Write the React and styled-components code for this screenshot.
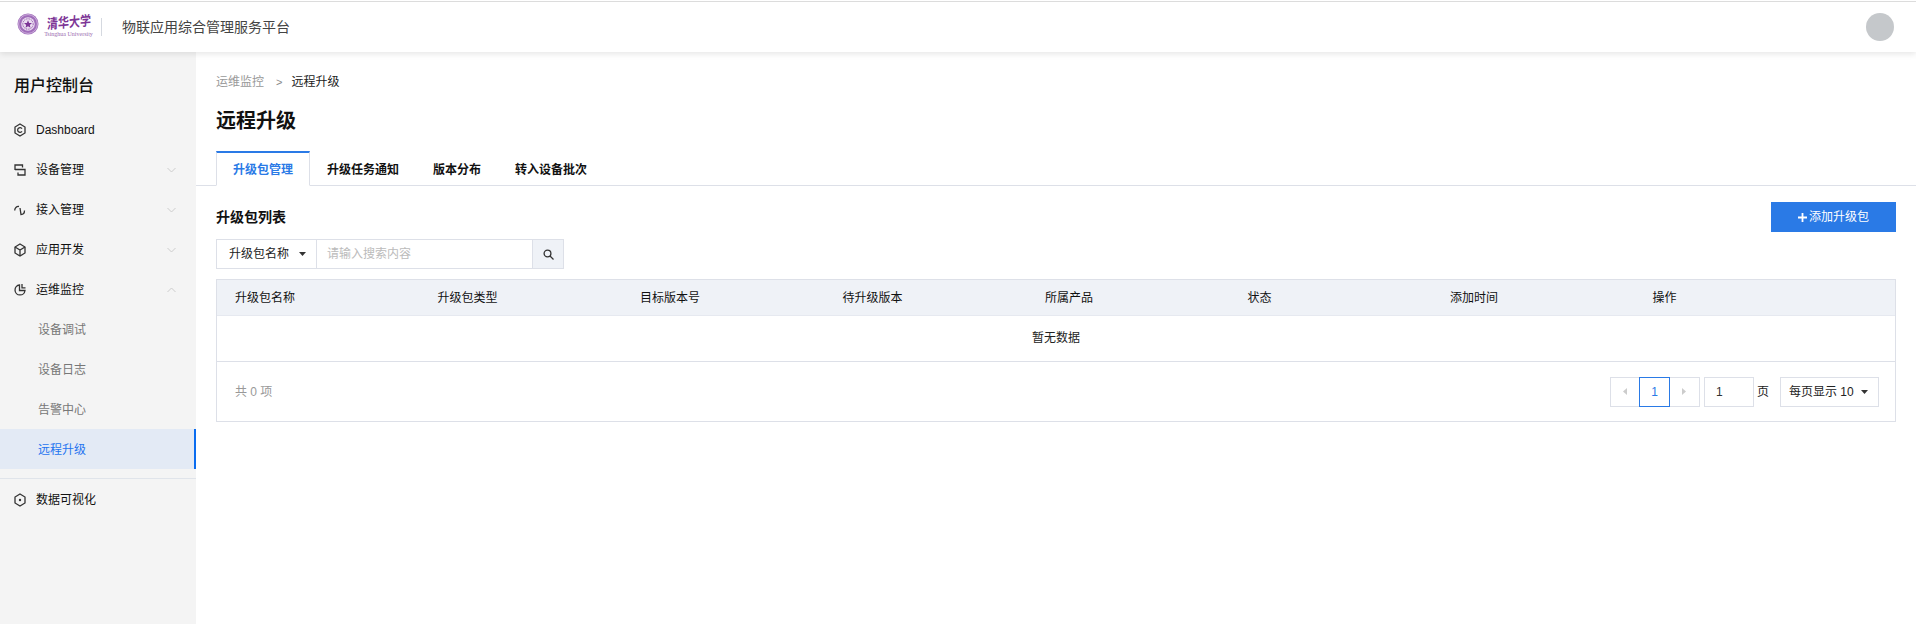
import React from "react";
import styled, { createGlobalStyle } from "styled-components";

const GlobalStyle = createGlobalStyle`
  html, body { margin: 0; padding: 0; background: #fff; }
  body { font-family: "Liberation Sans", "Noto Sans CJK SC", sans-serif; font-size: 12px; line-height: 18px; color: #111; }
  * { box-sizing: border-box; }
`;

const Page = styled.div`
  display: flex;
  flex-direction: column;
  height: 624px;
  overflow: hidden;
`;

const Header = styled.header`
  position: relative;
  z-index: 2;
  flex: none;
  display: flex;
  align-items: center;
  height: 52px;
  padding: 0 22px 0 17px;
  background: #fff;
  border-top: 1px solid #fff;
  box-shadow: 0 2px 6px rgba(0, 0, 0, 0.1);

  &::before {
    content: "";
    position: absolute;
    left: 0;
    right: 0;
    top: 0;
    height: 1px;
    background: #dcdcdc;
  }
`;

const LogoBlock = styled.div`
  display: flex;
  align-items: center;
  gap: 7px;
  margin-bottom: 3px;
`;

const SealMark = styled.svg`
  margin-bottom: 2px;
`;

const LogoWords = styled.div`
  display: flex;
  flex-direction: column;
  align-items: center;
  width: 45px;
  color: #7d3596;
`;

const LogoCn = styled.span`
  font-family: "Noto Sans CJK SC", sans-serif;
  font-size: 11px;
  line-height: 15px;
  font-weight: 700;
  white-space: nowrap;
  transform: scaleY(1.25) skewY(-4deg);
`;

const LogoEn = styled.span`
  margin-top: 2px;
  font-family: "Liberation Serif", serif;
  font-size: 6px;
  line-height: 6px;
  white-space: nowrap;
  color: #9a6cb0;
`;

const LogoDivider = styled.span`
  width: 1px;
  height: 18px;
  margin: 0 20px 0 10px;
  background: #d5d9e0;
`;

const AppName = styled.span`
  font-size: 14px;
  color: #444;
`;

const Avatar = styled.div`
  width: 28px;
  height: 28px;
  margin-left: auto;
  border-radius: 50%;
  background: #c5c8cb;
`;

const Body = styled.div`
  flex: 1;
  display: flex;
  min-height: 0;
`;

const Sidebar = styled.aside`
  flex: none;
  width: 196px;
  background: #f4f4f4;
`;

const SideTitle = styled.h2`
  margin: 22px 0 11px;
  padding-left: 14px;
  font-size: 16px;
  line-height: 24px;
  font-weight: 500;
  color: #111;
`;

const MenuItem = styled.div`
  display: flex;
  align-items: center;
  height: 40px;
  padding: 2px 20px 0 14px;
  gap: 10px;
  color: #111;
`;

const MenuLabel = styled.span`
  flex: 1;
`;

const SubItem = styled.div`
  display: flex;
  align-items: center;
  height: 40px;
  padding: 2px 0 0 38px;
  color: ${(p) => (p.$active ? "#1f74f0" : "#777")};
  background: ${(p) => (p.$active ? "#e3eaf5" : "transparent")};
  border-right: 2px solid ${(p) => (p.$active ? "#0a6cf0" : "transparent")};
`;

const SideDivider = styled.div`
  height: 1px;
  margin: 9px 0 0;
  background: #e0e4ea;
`;

const Main = styled.main`
  flex: 1;
  min-width: 0;
`;

const PageHead = styled.div`
  padding: 21px 20px 0;
`;

const Crumbs = styled.div`
  display: flex;
  align-items: center;
  height: 18px;
  color: #222;
`;

const CrumbLink = styled.span`
  color: #999;
`;

const CrumbSep = styled.span`
  margin: 0 9px 0 12px;
  color: #888;
  font-size: 11px;
`;

const PageTitle = styled.h1`
  margin: 18px 0 18px;
  font-size: 20px;
  line-height: 24px;
  font-weight: 700;
  color: #111;
`;

const Tabs = styled.div`
  display: flex;
  height: 35px;
  padding: 0 20px;
  border-bottom: 1px solid #dde0e8;
`;

const Tab = styled.div`
  display: flex;
  align-items: center;
  height: 35px;
  padding: 2px 16px 0;
  font-weight: 700;
  border: 1px solid ${(p) => (p.$active ? "#dde0e8" : "transparent")};
  border-top: 2px solid ${(p) => (p.$active ? "#2a7ae6" : "transparent")};
  border-bottom: 1px solid ${(p) => (p.$active ? "#fff" : "transparent")};
  color: ${(p) => (p.$active ? "#2a7ae6" : "#111")};
  background: ${(p) => (p.$active ? "#fff" : "transparent")};
`;

const Panel = styled.section`
  padding: 16px 20px 0;
`;

const PanelHead = styled.div`
  display: flex;
  align-items: center;
  justify-content: space-between;
  height: 30px;
`;

const PanelTitle = styled.h3`
  margin: 0;
  font-size: 14px;
  font-weight: 700;
  color: #111;
`;

const AddButton = styled.button`
  display: flex;
  align-items: center;
  justify-content: center;
  gap: 2px;
  width: 125px;
  height: 30px;
  padding: 0;
  border: 0;
  background: #2a7ae6;
  color: #fff;
  font: inherit;
`;

const SearchBar = styled.div`
  display: flex;
  width: 348px;
  height: 30px;
  margin: 7px 0 10px;
  border: 1px solid #dde0e8;
`;

const SearchSelect = styled.div`
  display: flex;
  align-items: center;
  justify-content: space-between;
  width: 100px;
  padding: 0 10px 0 12px;
  border-right: 1px solid #dde0e8;
  color: #222;
`;

const SearchInput = styled.div`
  flex: 1;
  display: flex;
  align-items: center;
  padding-left: 10px;
  color: #bbb;
`;

const SearchButton = styled.div`
  display: flex;
  align-items: center;
  justify-content: center;
  width: 31px;
  background: #eff2f7;
  border-left: 1px solid #dde0e8;
`;

const Table = styled.div`
  border: 1px solid #dde0e8;
`;

const HeadRow = styled.div`
  display: grid;
  grid-template-columns: repeat(7, 202.5px) 1fr;
  align-items: center;
  height: 36px;
  padding-left: 18px;
  background: #eff2f7;
  border-bottom: 1px solid #e6e9f0;
  color: #111;
`;

const EmptyRow = styled.div`
  display: flex;
  align-items: center;
  justify-content: center;
  height: 46px;
  padding-bottom: 2px;
  border-bottom: 1px solid #dde0e8;
  color: #222;
`;

const TableFoot = styled.div`
  display: flex;
  align-items: center;
  justify-content: space-between;
  height: 59px;
  padding: 0 16px 0 18px;
`;

const Total = styled.span`
  color: #999;
`;

const Pager = styled.div`
  display: flex;
  align-items: center;
`;

const PagerArrow = styled.div`
  display: flex;
  align-items: center;
  justify-content: center;
  width: 30px;
  height: 30px;
  border: 1px solid #dde0e8;
  border-left-width: ${(p) => (p.$flushLeft ? 0 : "1px")};
`;

const PagerCurrent = styled.div`
  display: flex;
  align-items: center;
  justify-content: center;
  width: 31px;
  height: 30px;
  margin-left: -1px;
  position: relative;
  border: 1px solid #2a7ae6;
  color: #2a7ae6;
`;

const PagerInput = styled.div`
  display: flex;
  align-items: center;
  width: 50px;
  height: 30px;
  margin-left: 4px;
  padding-left: 11px;
  border: 1px solid #dde0e8;
  color: #333;
`;

const PagerUnit = styled.span`
  margin: 0 11px 0 3px;
  color: #222;
`;

const PageSize = styled.div`
  display: flex;
  align-items: center;
  justify-content: space-between;
  width: 99px;
  height: 30px;
  padding: 0 10px 0 8px;
  border: 1px solid #dde0e8;
  color: #222;
`;

const Caret = () => (
  <svg width="7" height="4" viewBox="0 0 7 4">
    <path d="M0 0h7L3.5 4z" fill="#333" />
  </svg>
);

const Chevron = ({ up }) => (
  <svg width="9" height="6" viewBox="0 0 9 6" fill="none" stroke="#ccc" strokeWidth="1">
    <path d={up ? "M.5 5l4-4 4 4" : "M.5 1l4 4 4-4"} />
  </svg>
);

const MenuIcon = ({ children }) => (
  <svg width="12" height="14" viewBox="0 0 12 14" fill="none" stroke="#333" strokeWidth="1.3">
    {children}
  </svg>
);

const hexagon = "M6 1l5 3v6l-5 3-5-3V4z";

const PagerTriangle = ({ right }) => (
  <svg width="4" height="7" viewBox="0 0 4 7">
    <path d={right ? "M0 0l4 3.5L0 7z" : "M4 0L0 3.5 4 7z"} fill="#ccc" />
  </svg>
);

const Seal = () => (
  <SealMark width="22" height="24" viewBox="0 0 22 24" fill="none">
    <circle cx="11" cy="12" r="10.5" fill="#a06dba" />
    <circle cx="11" cy="12" r="9.4" stroke="#ead9f0" strokeWidth="0.6" />
    <circle cx="11" cy="12" r="6.8" fill="#eadcf0" />
    <circle cx="11" cy="12" r="5.2" stroke="#8b4ea6" strokeWidth="1" strokeDasharray="1 0.8" />
    <path d="M11 8.2l1.100 2.700 2.900.2-2.200 1.800.7 2.800-2.500-1.500-2.500 1.500.7-2.800-2.200-1.800 2.900-.2z" fill="#7d3596" />
  </SealMark>
);

const columns = ["升级包名称", "升级包类型", "目标版本号", "待升级版本", "所属产品", "状态", "添加时间", "操作"];
const tabs = ["升级包管理", "升级任务通知", "版本分布", "转入设备批次"];

export default function App() {
  return (
    <Page>
      <GlobalStyle />
      <Header>
        <LogoBlock>
          <Seal />
          <LogoWords>
            <LogoCn>清华大学</LogoCn>
            <LogoEn>Tsinghua University</LogoEn>
          </LogoWords>
        </LogoBlock>
        <LogoDivider />
        <AppName>物联应用综合管理服务平台</AppName>
        <Avatar />
      </Header>
      <Body>
        <Sidebar>
          <SideTitle>用户控制台</SideTitle>
          <MenuItem>
            <MenuIcon>
              <path d={hexagon} />
              <path d="M8 5.600a2.400 2.400 0 1 0 0 2.800" />
            </MenuIcon>
            <MenuLabel>Dashboard</MenuLabel>
          </MenuItem>
          <MenuItem>
            <MenuIcon>
              <path d="M1 7V2h7.500v2.500" />
              <path d="M1 6.500h3.500M4 6.500h7V12H4V9.500" />
            </MenuIcon>
            <MenuLabel>设备管理</MenuLabel>
            <Chevron />
          </MenuItem>
          <MenuItem>
            <MenuIcon>
              <path d="M.8 7.500A3.600 3.600 0 0 1 5 3.500" />
              <path d="M6 5l1 6.500c2 0 3.500-1.500 3.500-4" />
            </MenuIcon>
            <MenuLabel>接入管理</MenuLabel>
            <Chevron />
          </MenuItem>
          <MenuItem>
            <MenuIcon>
              <path d={hexagon} />
              <path d="M1 4l5 3 5-3M6 7v6" />
            </MenuIcon>
            <MenuLabel>应用开发</MenuLabel>
            <Chevron />
          </MenuItem>
          <MenuItem>
            <MenuIcon>
              <path d="M5.500 2a5 5 0 1 0 5.500 5.500H5.500z" />
              <path d="M8 1v3.800h3.500" />
            </MenuIcon>
            <MenuLabel>运维监控</MenuLabel>
            <Chevron up />
          </MenuItem>
          <SubItem>设备调试</SubItem>
          <SubItem>设备日志</SubItem>
          <SubItem>告警中心</SubItem>
          <SubItem $active>远程升级</SubItem>
          <SideDivider />
          <MenuItem>
            <MenuIcon>
              <path d={hexagon} />
              <circle cx="6" cy="7" r="1.200" fill="#333" stroke="none" />
            </MenuIcon>
            <MenuLabel>数据可视化</MenuLabel>
          </MenuItem>
        </Sidebar>
        <Main>
          <PageHead>
            <Crumbs>
              <CrumbLink>运维监控</CrumbLink>
              <CrumbSep>&gt;</CrumbSep>
              <span>远程升级</span>
            </Crumbs>
            <PageTitle>远程升级</PageTitle>
          </PageHead>
          <Tabs>
            {tabs.map((t, i) => (
              <Tab key={t} $active={i === 0}>{t}</Tab>
            ))}
          </Tabs>
          <Panel>
            <PanelHead>
              <PanelTitle>升级包列表</PanelTitle>
              <AddButton>
                <svg width="9" height="9" viewBox="0 0 9 9">
                  <path d="M3.600 0h1.800v3.600H9v1.800H5.400V9H3.600V5.400H0V3.600h3.600z" fill="#fff" />
                </svg>
                添加升级包
              </AddButton>
            </PanelHead>
            <SearchBar>
              <SearchSelect>
                升级包名称
                <Caret />
              </SearchSelect>
              <SearchInput>请输入搜索内容</SearchInput>
              <SearchButton>
                <svg width="11" height="11" viewBox="0 0 11 11" fill="none" stroke="#333" strokeWidth="1.300">
                  <circle cx="4.500" cy="4.500" r="3.400" />
                  <path d="M7 7l3.500 3.500" />
                </svg>
              </SearchButton>
            </SearchBar>
            <Table>
              <HeadRow>
                {columns.map((c) => (
                  <span key={c}>{c}</span>
                ))}
              </HeadRow>
              <EmptyRow>暂无数据</EmptyRow>
              <TableFoot>
                <Total>共 0 项</Total>
                <Pager>
                  <PagerArrow><PagerTriangle /></PagerArrow>
                  <PagerCurrent>1</PagerCurrent>
                  <PagerArrow $flushLeft><PagerTriangle right /></PagerArrow>
                  <PagerInput>1</PagerInput>
                  <PagerUnit>页</PagerUnit>
                  <PageSize>
                    每页显示 10
                    <Caret />
                  </PageSize>
                </Pager>
              </TableFoot>
            </Table>
          </Panel>
        </Main>
      </Body>
    </Page>
  );
}
